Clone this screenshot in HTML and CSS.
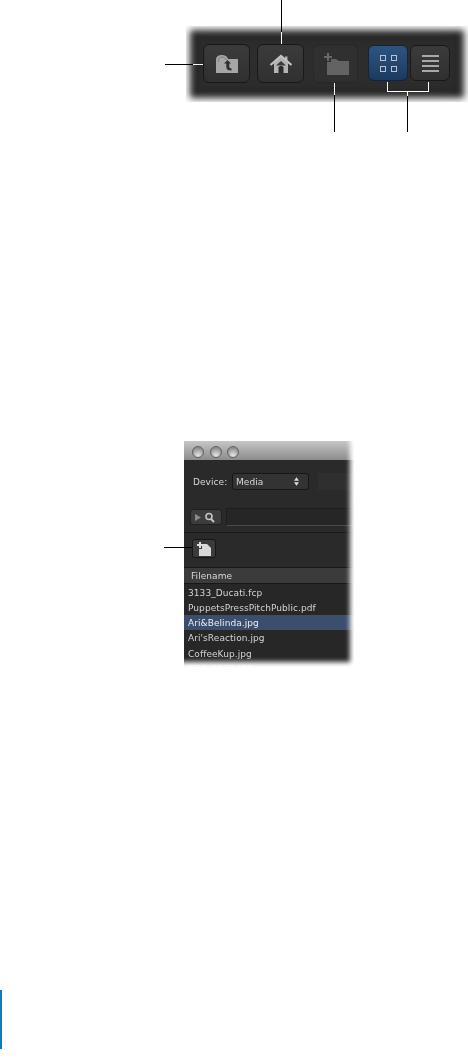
FILE: index.html
```html
<!doctype html>
<html>
    <head>
        <meta charset='utf-8'>
        <title>Browser controls</title>
        <link rel="stylesheet" href="styles.css">
    </head>
    <body>
        <div class='fig-top'>
            <div class='toolbar'>
                <a class='tbtn tbtn-up'>
                    <svg width='24' height='20' viewBox='0 0 24 20'>
                        <path d='M1 19V6C1 2 4 1 7 1C10 1 12 2 13 5H23V19Z' fill='#a6a6a6'/>
                        <path d='M3 8C3 4.5 5 3 7 3C9 3 10.5 4 11 6' fill='none' stroke='#7c7c7c'/>
                        <path d='M12.5 6L16 9.5H14.3V13C14.3 14 15 14.3 16.5 14.3V16.5C13 16.5 11.3 15.5 11.3 13V9.5H9Z' fill='#2f2f2f'/>
                    </svg>
                </a>
                <a class='tbtn'>
                    <svg width='24' height='20' viewBox='0 0 24 20'>
                        <path d='M5 9V19H19V9L12 3Z' fill='#b4b4b4'/>
                        <path d='M7 11.5L12 7L17 11.5Z' fill='#3a3a3a'/>
                        <path d='M9.5 19V13.5C9.5 11.5 14.5 11.5 14.5 13.5V19Z' fill='#2b2b2b'/>
                        <path d='M16 2.5H18.5V7H16Z' fill='#b4b4b4'/>
                        <path d='M1.5 11L12 2L22.5 11' fill='none' stroke='#c4c4c4' stroke-width='2.2'/>
                    </svg>
                </a>
                <a class='tbtn tbtn-off'>
                    <svg width='28' height='24' viewBox='0 0 28 24'>
                        <path d='M5 1H7V4H10V6H7V9H5V6H2V4H5Z' fill='#696969'/>
                        <path d='M5 23V10H9V7H14L17 9H27V23Z' fill='#636363'/>
                    </svg>
                </a>
                <div class='seg'>
                    <a class='seg-btn seg-on'>
                        <span class='grid-ico'><i></i><i></i><i></i><i></i></span>
                    </a>
                    <a class='seg-btn'>
                        <span class='list-ico'><i></i><i></i><i></i><i></i></span>
                    </a>
                </div>
            </div>
            <div class='fade'></div>

            <i class='line line-home'></i>
            <i class='line line-home-w'></i>
            <i class='line line-up'></i>
            <i class='line line-up-w'></i>
            <i class='line line-new'></i>
            <i class='line line-new-w'></i>
            <i class='bracket'></i>
            <i class='line line-view'></i>
            <i class='line line-view-w'></i>
        </div>

        <div class='fig-window'>
            <div class='window'>
                <div class='titlebar'>
                    <span class='dot'></span><span class='dot'></span><span class='dot'></span>
                </div>
                <div class='device-row'>
                    <label>Device:</label>
                    <div class='select'>
                        <span>Media</span>
                        <svg width='5' height='9' viewBox='0 0 6 10'>
                            <path d='M3 0L6 4H0ZM3 10L0 6H6Z' fill='#ddd'/>
                        </svg>
                    </div>
                    <div class='ghost'></div>
                </div>
                <div class='search-row'>
                    <a class='search-btn'>
                        <svg width='24' height='11' viewBox='0 0 24 11'>
                            <path d='M1 2L7 5.5L1 9Z' fill='#8a8a8a'/>
                            <circle cx='15' cy='4.5' r='3' fill='none' stroke='#c4c4c4' stroke-width='1.6'/>
                            <path d='M17 7L20 10' stroke='#c4c4c4' stroke-width='2'/>
                        </svg>
                    </a>
                    <div class='search-field'></div>
                </div>
                <div class='action-row'>
                    <a class='new-btn'>
                        <svg width='16' height='14' viewBox='0 0 16 14'>
                            <path d='M3 0H5V2H7V4H5V6H3V4H1V2H3Z' fill='#ddd'/>
                            <path d='M3 14V7H6V2H11L15 6V14Z' fill='#d9d9d9'/>
                        </svg>
                    </a>
                </div>
                <div class='list-head'>Filename</div>
                <ul class='files'>
                    <li>3133_Ducati.fcp</li>
                    <li>PuppetsPressPitchPublic.pdf</li>
                    <li class='sel'>Ari&amp;Belinda.jpg</li>
                    <li>Ari'sReaction.jpg</li>
                    <li>CoffeeKup.jpg</li>
                    <li>DSC_0003.JPG</li>
                </ul>
                <div class='window-fade'></div>
            </div>
            <i class='line line-add'></i>
        </div>

        <div class='page-mark'></div>
    </body>
</html>
```

FILE: styles.css
```css
html,body,ul,li {
    padding:0;
    margin:0;
}
ul,li {
    list-style:none;
}
html,body {
    background:#fff;
}
body {
    height:1058px;
    overflow:hidden;
    font-family:'DejaVu Sans','Liberation Sans',sans-serif;
}
svg {
    display:block;
}

/* top figure */
.fig-top {
    position:relative;
    height:132px;
    padding-top:26px;
    box-sizing:border-box;
}
.toolbar {
    display:flex;
    align-items:flex-start;
    box-sizing:border-box;
    margin-left:186px;
    width:282px;
    height:76px;
    padding:18px 0 0 17px;
    background:#2d2d2d;
    filter:blur(.4px);
}
.fade {
    position:absolute;
    left:186px;
    top:26px;
    width:282px;
    height:76px;
    box-shadow:inset 0 0 7px 4px #fff, inset 0 0 12px 8px #1f1f1f;
}
.tbtn {
    display:flex;
    align-items:center;
    justify-content:center;
    box-sizing:border-box;
    width:47px;
    height:39px;
    margin-right:8px;
    border:1px solid #191919;
    border-radius:6px;
    background:linear-gradient(#3b3b3b,#303030);
}
.tbtn-up {
    margin-right:7px;
}
.tbtn-off {
    width:45px;
    margin:0 0 0 1px;
    border-color:#282828;
    background:#303030;
}
.seg {
    display:flex;
    gap:2px;
    margin:1px 0 0 10px;
}
.seg-btn {
    display:flex;
    align-items:center;
    justify-content:center;
    box-sizing:border-box;
    width:40px;
    height:36px;
    border:1px solid #191919;
    border-radius:6px;
    background:linear-gradient(#3b3b3b,#303030);
}
.seg-on {
    border-color:#14243a;
    background:linear-gradient(#2f5482,#1c3a5e);
}
.grid-ico {
    display:grid;
    grid-template-columns:6px 6px;
    gap:5px;
}
.grid-ico i {
    box-sizing:border-box;
    height:6px;
    border:1.5px solid #b7c3d1;
}
.list-ico {
    display:flex;
    flex-direction:column;
    gap:3px;
    width:17px;
}
.list-ico i {
    height:2px;
    background:#a8a8a8;
}

/* callout lines */
.line {
    position:absolute;
    background:#000;
}
.line-home {
    left:281px;
    top:0;
    width:1px;
    height:32px;
}
.line-home-w {
    left:281px;
    top:32px;
    width:1px;
    height:12px;
    background:#fff;
}
.line-up {
    left:165px;
    top:64px;
    width:28px;
    height:1px;
}
.line-up-w {
    left:193px;
    top:64px;
    width:10px;
    height:1px;
    background:#fff;
}
.line-new {
    left:334px;
    top:95px;
    width:1px;
    height:37px;
}
.line-new-w {
    left:334px;
    top:83px;
    width:1px;
    height:12px;
    background:#fff;
}
.bracket {
    position:absolute;
    left:387px;
    top:82px;
    box-sizing:border-box;
    width:42px;
    height:10px;
    border:1px solid #fff;
    border-top:0;
}
.line-view {
    left:407px;
    top:96px;
    width:1px;
    height:36px;
}
.line-view-w {
    left:407px;
    top:92px;
    width:1px;
    height:4px;
    background:#fff;
}

/* window figure */
.fig-window {
    position:relative;
    margin-top:309px;
    height:226px;
}
.window {
    position:relative;
    overflow:hidden;
    margin-left:184px;
    width:170px;
    height:226px;
    background:#2a2a2a;
    font-size:9px;
    letter-spacing:.07px;
    color:#d8d8d8;
}
.titlebar {
    display:flex;
    gap:5.5px;
    box-sizing:border-box;
    height:19px;
    padding:5px 0 0 8px;
    background:linear-gradient(#c6c6c6,#8c8c8c);
}
.dot {
    width:12px;
    height:12px;
    border-radius:50%;
    border:1px solid #5f5f5f;
    box-sizing:border-box;
    background:radial-gradient(circle at 50% 85%,#e8e8e8,#8f8f8f 75%);
}
.device-row,
.search-row,
.action-row,
.list-head,
.files {
    filter:blur(.35px);
}
.device-row {
    display:flex;
    align-items:center;
    height:17px;
    margin-top:13px;
    padding-left:9px;
}
.device-row label {
    width:39px;
}
.select {
    display:flex;
    align-items:center;
    justify-content:space-between;
    box-sizing:border-box;
    width:77px;
    height:17px;
    padding:0 9px 0 3px;
    border:1px solid #161616;
    border-radius:3px;
    background:#333;
}
.ghost {
    flex:1;
    height:17px;
    margin-left:9px;
    background:#2f2f2f;
}
.search-row {
    display:flex;
    align-items:center;
    height:18px;
    margin-top:18px;
    padding-left:6px;
}
.search-btn {
    display:flex;
    align-items:center;
    justify-content:center;
    box-sizing:border-box;
    width:32px;
    height:16px;
    border:1px solid #1f1f1f;
    border-radius:3px;
    background:#3c3c3c;
}
.search-field {
    flex:1;
    height:18px;
    margin-left:4px;
    border:1px solid #1e1e1e;
    border-bottom-color:#4a4a4a;
    box-sizing:border-box;
    background:#262626;
}
.action-row {
    box-sizing:border-box;
    height:35px;
    margin-top:6px;
    padding:6px 0 0 8px;
    border-top:1px solid #191919;
}
.new-btn {
    display:flex;
    align-items:center;
    justify-content:center;
    box-sizing:border-box;
    width:24px;
    height:19px;
    border:1px solid #161616;
    border-radius:3px;
    background:#3b3b3b;
}
.list-head {
    box-sizing:border-box;
    height:17px;
    line-height:16px;
    padding-left:7px;
    border-top:1px solid #171717;
    border-bottom:1px solid #171717;
    background:#3b3b3b;
}
.files {
    padding-top:.6px;
    background:#272727;
    color:#d4d4d4;
}
.files li {
    height:15.3px;
    line-height:17px;
    padding-left:4px;
    white-space:nowrap;
}
.files .sel {
    background:#3c4e6d;
    color:#eee;
}
.window-fade {
    position:absolute;
    top:0;
    right:0;
    bottom:0;
    left:0;
    box-shadow:inset -6px -7px 5px -2px #fff;
}

.line-add {
    left:164px;
    top:106px;
    width:28px;
    height:1px;
}

.page-mark {
    width:2px;
    height:59px;
    margin-top:323px;
    background:#0a7cc4;
}
```
